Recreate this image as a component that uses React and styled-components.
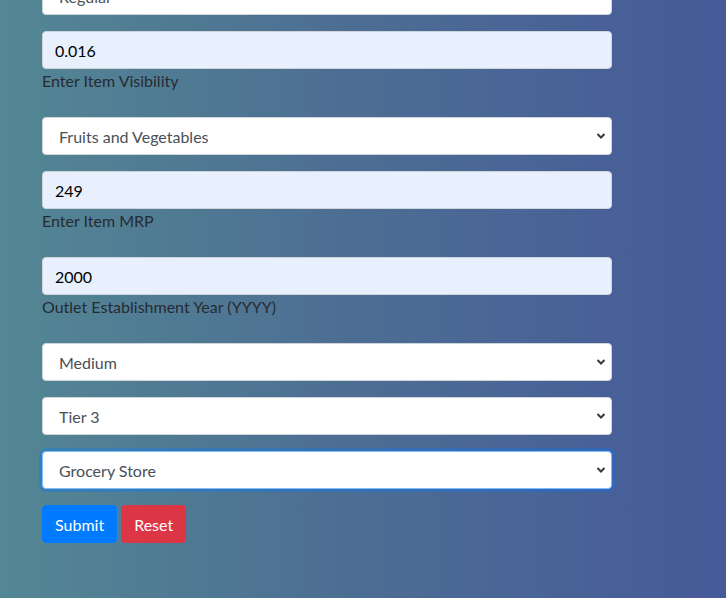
import React, { useState } from "react";
import styled, { createGlobalStyle, css } from "styled-components";

const GlobalStyle = createGlobalStyle`
  html, body {
    margin: 0;
    padding: 0;
  }
  body {
    font-family: Lato, "Noto Sans", sans-serif;
    overflow: hidden;
  }
`;

const Page = styled.div`
  min-height: 100vh;
  background: linear-gradient(to right, #538794 0%, #4d6f93 45%, #465a99 100%);
  padding: 0 42px;
  box-sizing: border-box;
  overflow: hidden;
`;

const Form = styled.form`
  width: 570px;
  margin-top: -23px;
  display: flex;
  flex-direction: column;
`;

const Group = styled.div`
  display: flex;
  flex-direction: column;
  margin-bottom: ${(p) => (p.$label ? "24px" : "16px")};
`;

const fieldBase = css`
  box-sizing: border-box;
  width: 100%;
  height: 38px;
  font-family: Lato, "Noto Sans", sans-serif;
  font-size: 16px;
  border: 1px solid #ced4da;
  border-radius: 4px;
  outline: none;
`;

const Input = styled.input`
  ${fieldBase}
  padding: 6px 12px;
  background: #e8f0fe;
  color: #000;
`;

const SelectWrap = styled.div`
  position: relative;
`;

const Select = styled.select`
  ${fieldBase}
  appearance: none;
  padding: 6px 30px 6px 16px;
  background: #fff;
  color: #495057;
  ${(p) =>
    p.$focused &&
    css`
      border-color: #80bdff;
      box-shadow: 0 0 0 3px rgba(0, 123, 255, 0.3);
    `}
`;

const Chevron = styled.svg`
  position: absolute;
  right: 6px;
  top: 15px;
  width: 10px;
  height: 8px;
  pointer-events: none;
`;

const Label = styled.label`
  font-size: 16px;
  line-height: 24px;
  color: #262b31;
`;

const Buttons = styled.div`
  display: flex;
  gap: 4px;
`;

const Button = styled.button`
  height: 38px;
  padding: 6px 12px;
  border: 1px solid ${(p) => p.$bg};
  border-radius: 4px;
  background: ${(p) => p.$bg};
  color: #fff;
  font-family: Lato, "Noto Sans", sans-serif;
  font-size: 16px;
  cursor: pointer;
`;

const Dropdown = ({ value, options, focused }) => (
  <SelectWrap>
    <Select defaultValue={value} $focused={focused}>
      {options.map((o) => (
        <option key={o}>{o}</option>
      ))}
    </Select>
    <Chevron viewBox="0 0 10 8">
      <path d="M1.5 2 L5 5.5 L8.5 2" fill="none" stroke="#343a40" strokeWidth="2" />
    </Chevron>
  </SelectWrap>
);

const App = () => {
  const [form] = useState({
    visibility: "0.016",
    mrp: "249",
    year: "2000",
  });

  return (
    <Page>
      <GlobalStyle />
      <Form onSubmit={(e) => e.preventDefault()}>
        <Group>
          <Dropdown value="Regular" options={["Low Fat", "Regular"]} />
        </Group>
        <Group $label>
          <Input defaultValue={form.visibility} />
          <Label>Enter Item Visibility</Label>
        </Group>
        <Group>
          <Dropdown
            value="Fruits and Vegetables"
            options={["Dairy", "Fruits and Vegetables", "Snack Foods"]}
          />
        </Group>
        <Group $label>
          <Input defaultValue={form.mrp} />
          <Label>Enter Item MRP</Label>
        </Group>
        <Group $label>
          <Input defaultValue={form.year} />
          <Label>Outlet Establishment Year (YYYY)</Label>
        </Group>
        <Group>
          <Dropdown value="Medium" options={["Small", "Medium", "High"]} />
        </Group>
        <Group>
          <Dropdown value="Tier 3" options={["Tier 1", "Tier 2", "Tier 3"]} />
        </Group>
        <Group>
          <Dropdown
            value="Grocery Store"
            options={["Grocery Store", "Supermarket Type1", "Supermarket Type2"]}
            focused
          />
        </Group>
        <Buttons>
          <Button type="submit" $bg="#007bff">Submit</Button>
          <Button type="reset" $bg="#dc3545">Reset</Button>
        </Buttons>
      </Form>
    </Page>
  );
};

export default App;
